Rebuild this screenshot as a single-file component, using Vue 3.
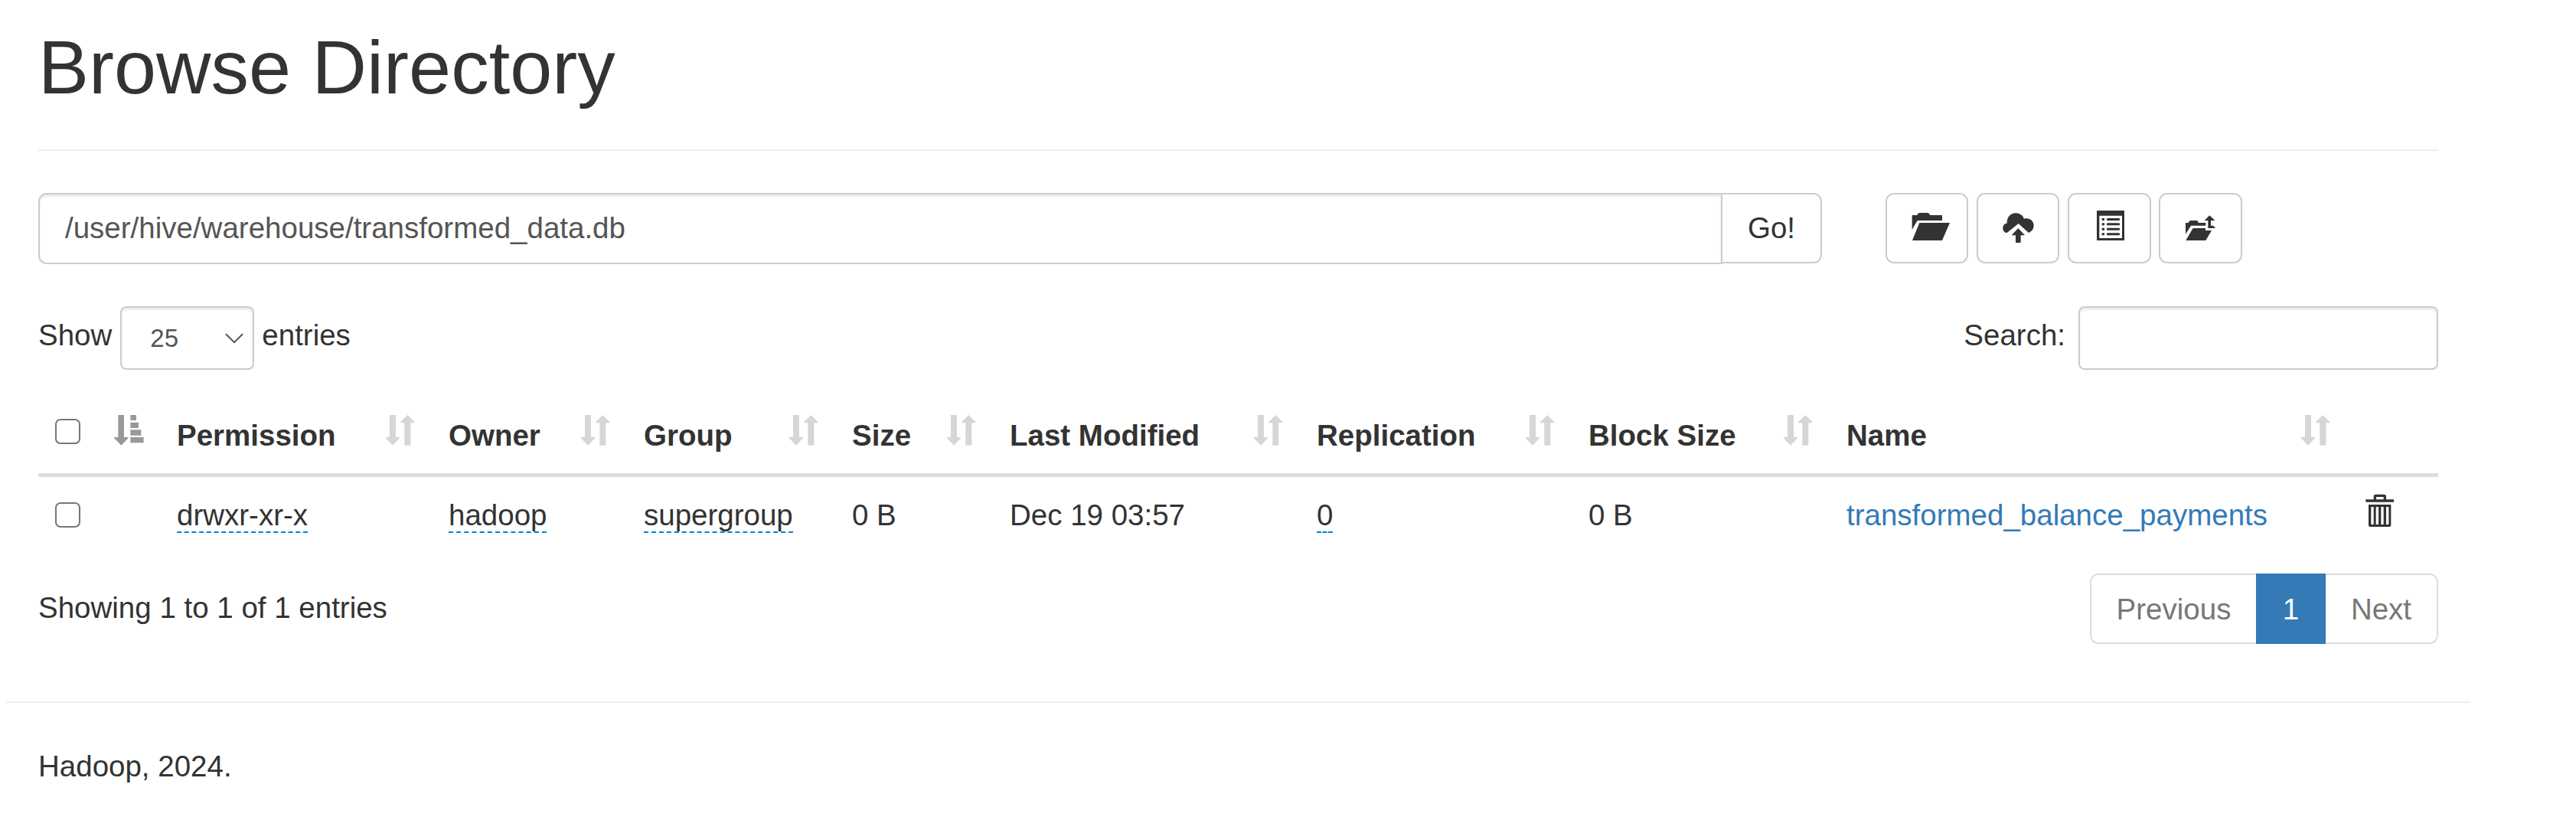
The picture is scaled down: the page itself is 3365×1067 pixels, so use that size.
<script setup>
import { ref } from 'vue'

const path = ref('/user/hive/warehouse/transformed_data.db')
const pageSize = ref('25')
const query = ref('')

const columns = [
  { key: 'permission', label: 'Permission' },
  { key: 'owner', label: 'Owner' },
  { key: 'group', label: 'Group' },
  { key: 'size', label: 'Size' },
  { key: 'modified', label: 'Last Modified' },
  { key: 'replication', label: 'Replication' },
  { key: 'block', label: 'Block Size' },
  { key: 'name', label: 'Name' }
]

const editable = ['permission', 'owner', 'group', 'replication']

const rows = [
  {
    permission: 'drwxr-xr-x',
    owner: 'hadoop',
    group: 'supergroup',
    size: '0 B',
    modified: 'Dec 19 03:57',
    replication: '0',
    block: '0 B',
    name: 'transformed_balance_payments'
  }
]
</script>

<template>
  <div class="page">
    <main class="container">
      <h1>Browse Directory</h1>
      <hr class="rule" />

      <div class="toolbar">
        <div class="path-group">
          <input v-model="path" class="path" type="text" />
          <button class="btn go">Go!</button>
        </div>
        <div class="actions">
          <button class="btn icon-btn" aria-label="Open folder">
            <svg viewBox="15 27 312 264">
              <path d="M113 165V108H133Q136 99 144 99H173Q181 99 183 108H231V129H134Z" />
              <path d="M142 138H261L231 207H114Z" />
            </svg>
          </button>
          <button class="btn icon-btn" aria-label="Upload files">
            <svg viewBox="372 27 312 264">
              <path d="M485 177C475 177 469 169 469 159C469 148 476 140 485 140C484 115 500 100 519 100C534 100 547 109 552 122C573 117 590 130 590 148C590 162 583 172 570 177L530 141Z" />
              <path d="M529 159L555 187H539V216H519V187H503Z" />
            </svg>
          </button>
          <button class="btn icon-btn wide" aria-label="Paste">
            <svg viewBox="-21 27 315 264">
              <path fill-rule="evenodd" d="M87 90H195V207H87ZM97 110V198H186V110Z" />
              <path d="M107 120h10v9h-10zM107 139h10v9h-10zM107 158h10v9h-10zM107 178h10v9h-10z" />
              <path d="M128 120h47l2 2v5l-2 2h-47l-2-2v-5zM128 139h47l2 2v5l-2 2h-47l-2-2v-5zM128 158h47l2 2v5l-2 2h-47l-2-2v-5zM128 178h47l2 2v5l-2 2h-47l-2-2v-5z" />
            </svg>
          </button>
          <button class="btn icon-btn wide" aria-label="Parent directory">
            <svg viewBox="336 27 315 264">
              <path d="M435 182V138H446Q448 129 454 129H478Q484 129 486 138H514V149H456Z" />
              <path d="M464 159H513V168H537L514 207H436Z" />
              <path d="M529 109L550 129H534V149H543L553 159H523V129H509Z" />
            </svg>
          </button>
        </div>
      </div>

      <div class="controls">
        <label class="length">
          <span>Show</span>
          <span class="select-wrap">
            <select v-model="pageSize">
              <option>25</option>
            </select>
            <svg class="chevron" viewBox="0 0 24 14"><path d="M1 1.2L12 12.2L23 1.2" /></svg>
          </span>
          <span>entries</span>
        </label>
        <label class="search">
          <span>Search:</span>
          <input v-model="query" type="text" />
        </label>
      </div>

      <table>
        <colgroup>
          <col class="c-check" />
          <col v-for="c in columns" :key="c.key" :class="'c-' + c.key" />
          <col class="c-trash" />
        </colgroup>
        <thead>
          <tr>
            <th>
              <div class="head">
                <input type="checkbox" class="check" />
                <svg class="sort sorted" viewBox="327 456 117 120">
                  <path d="M343 456h23v87h16l1 3l-28 29l-28-29l1-3h15z" />
                  <path d="M391 456h23v21h-23zM391 485h32v22h-32zM391 514h42v22h-42zM391 543h52v22h-52z" />
                </svg>
              </div>
            </th>
            <th v-for="c in columns" :key="c.key">
              <div class="head">
                <span>{{ c.label }}</span>
                <svg class="sort" viewBox="1389 456 117 120">
                  <path d="M1407 456h24v87h15l1 3l-28 29l-28-29l1-3h15z" />
                  <path d="M1477 456l28 28l-2 3h-14v88h-24v-88h-15l-1-3z" />
                </svg>
              </div>
            </th>
            <th></th>
          </tr>
        </thead>
        <tbody>
          <tr v-for="r in rows" :key="r.name">
            <td>
              <div class="cell"><input type="checkbox" class="check row-check" /></div>
            </td>
            <td v-for="c in columns" :key="c.key">
              <a v-if="c.key === 'name'" class="link">{{ r.name }}</a>
              <span v-else-if="editable.includes(c.key)" class="editable">{{ r[c.key] }}</span>
              <template v-else>{{ r[c.key] }}</template>
            </td>
            <td>
              <div class="cell">
                <svg class="trash" viewBox="90 45 114 132">
                  <path fill-rule="evenodd" d="M91 67H122V53Q123 47 129 47H164Q170 47 171 53V67H201V77H91ZM132 57V67H161V57Z" />
                  <path fill-rule="evenodd" d="M102 87H190V168Q190 174 184 174H108Q102 174 102 168ZM112 96V165H122V96ZM131 96V165H141V96ZM151 96V165H161V96ZM171 96V165H181V96Z" />
                </svg>
              </div>
            </td>
          </tr>
        </tbody>
      </table>

      <div class="table-foot">
        <div class="info">Showing 1 to 1 of 1 entries</div>
        <nav class="pager">
          <a class="prev">Previous</a>
          <a class="current">1</a>
          <a class="next">Next</a>
        </nav>
      </div>
    </main>
    <hr class="rule bottom" />
    <footer>Hadoop, 2024.</footer>
  </div>
</template>

<style>
body {
  margin: 0;
  background: #fff;
}
</style>

<style scoped>
.page,
.page * {
  box-sizing: border-box;
}
.page {
  width: 3365px;
  height: 1067px;
  overflow: hidden;
  font-family: "Liberation Sans", Arial, sans-serif;
  font-size: 38.5px;
  line-height: 55px;
  color: #333;
}
input,
select,
button {
  font-family: inherit;
  margin: 0;
}
.container {
  width: 3135px;
  margin-left: 50px;
  padding-top: 34px;
}
h1 {
  margin: 0 0 53px;
  font-size: 99px;
  line-height: 108px;
  font-weight: 400;
}
.rule {
  height: 2px;
  margin: 0;
  border: 0;
  background: #eee;
}
.toolbar {
  display: flex;
  align-items: flex-start;
  gap: 83px;
  height: 93px;
  margin-top: 55px;
}
.path-group {
  display: flex;
  align-items: flex-start;
  width: 2330px;
}
.path {
  width: 2200px;
  height: 93px;
  padding: 0 33px 1px;
  border: 2px solid #ccc;
  border-radius: 11px 0 0 11px;
  box-shadow: inset 0 3px 3px rgba(0, 0, 0, 0.075);
  font-size: 38.5px;
  color: #555;
  outline: none;
}
.btn {
  height: 92px;
  padding: 0;
  border: 2px solid #ccc;
  border-radius: 11px;
  background: #fff;
  color: #333;
}
.go {
  width: 132px;
  margin-left: -2px;
  border-radius: 0 11px 11px 0;
  font-size: 38.5px;
  line-height: 88px;
}
.actions {
  display: flex;
  gap: 11px;
}
.icon-btn {
  width: 108px;
}
.icon-btn.wide {
  width: 109px;
}
.icon-btn.wide:nth-child(4) {
  margin-left: -1px;
}
.icon-btn svg {
  display: block;
  width: 100%;
  height: 88px;
}
svg {
  fill: #333;
}
.controls {
  display: flex;
  justify-content: space-between;
  height: 83px;
  margin-top: 55px;
  line-height: 75px;
}
.length,
.search {
  display: flex;
  align-items: flex-start;
}
.length {
  gap: 11px;
}
.select-wrap {
  position: relative;
  display: block;
  width: 175px;
  height: 83px;
  margin-right: -1px;
}
select {
  display: block;
  appearance: none;
  width: 175px;
  height: 83px;
  padding: 0 37px;
  font-size: 33px;
}
select,
.search input {
  border: 2px solid #ccc;
  border-radius: 8px;
  background: #fff;
  box-shadow: inset 0 3px 3px rgba(0, 0, 0, 0.075);
  color: #555;
  outline: none;
}
.chevron {
  position: absolute;
  top: 35px;
  right: 14px;
  width: 24px;
  height: 14px;
  fill: none;
  stroke: #555;
  stroke-width: 2;
}
.search {
  gap: 17px;
}
.search input {
  width: 470px;
  height: 83px;
}
table {
  width: 3135px;
  margin-top: 36px;
  border-spacing: 0;
  border-collapse: separate;
  table-layout: fixed;
}
th,
td {
  padding: 22px;
  text-align: left;
  vertical-align: top;
}
th {
  border-bottom: 5px solid #ddd;
}
.c-check { width: 159px; }
.c-permission { width: 355px; }
.c-owner { width: 255px; }
.c-group { width: 272px; }
.c-size { width: 206px; }
.c-modified { width: 401px; }
.c-replication { width: 355px; }
.c-block { width: 337px; }
.c-name { width: 676px; }
.c-trash { width: 119px; }
.head {
  display: flex;
  justify-content: space-between;
  height: 55px;
  white-space: nowrap;
}
.check {
  appearance: none;
  display: block;
  width: 33px;
  height: 33px;
  margin-top: 6px;
  border: 2.5px solid #767676;
  border-radius: 7px;
  background: #fff;
}
.row-check {
  margin-top: 11px;
}
.sort {
  flex: none;
  width: 39px;
  height: 40px;
  margin-top: 1px;
  fill: #d6d6d6;
}
.sorted {
  margin-right: -1px;
  fill: #999;
}
.cell {
  display: flex;
  align-items: flex-start;
  height: 55px;
}
.editable {
  border-bottom: 2px dashed #08c;
}
.link {
  color: #337ab7;
}
.trash {
  flex: none;
  width: 38px;
  height: 44px;
  margin-left: 2px;
}
.table-foot {
  display: flex;
  justify-content: space-between;
  margin-top: 27px;
}
.info {
  padding-top: 17px;
}
.pager {
  display: flex;
  height: 92px;
  line-height: 89px;
  text-align: center;
  color: #777;
}
.pager a {
  border: 2px solid #ddd;
}
.pager .prev {
  width: 217px;
  border-right: 0;
  border-radius: 11px 0 0 11px;
}
.pager .current {
  width: 91px;
  border-color: #337ab7;
  background: #337ab7;
  color: #fff;
}
.pager .next {
  width: 147px;
  border-left: 0;
  border-radius: 0 11px 11px 0;
}
.bottom {
  width: 3218px;
  margin: 75px 0 0 8px;
}
footer {
  margin: 55px 0 0 50px;
}
</style>
